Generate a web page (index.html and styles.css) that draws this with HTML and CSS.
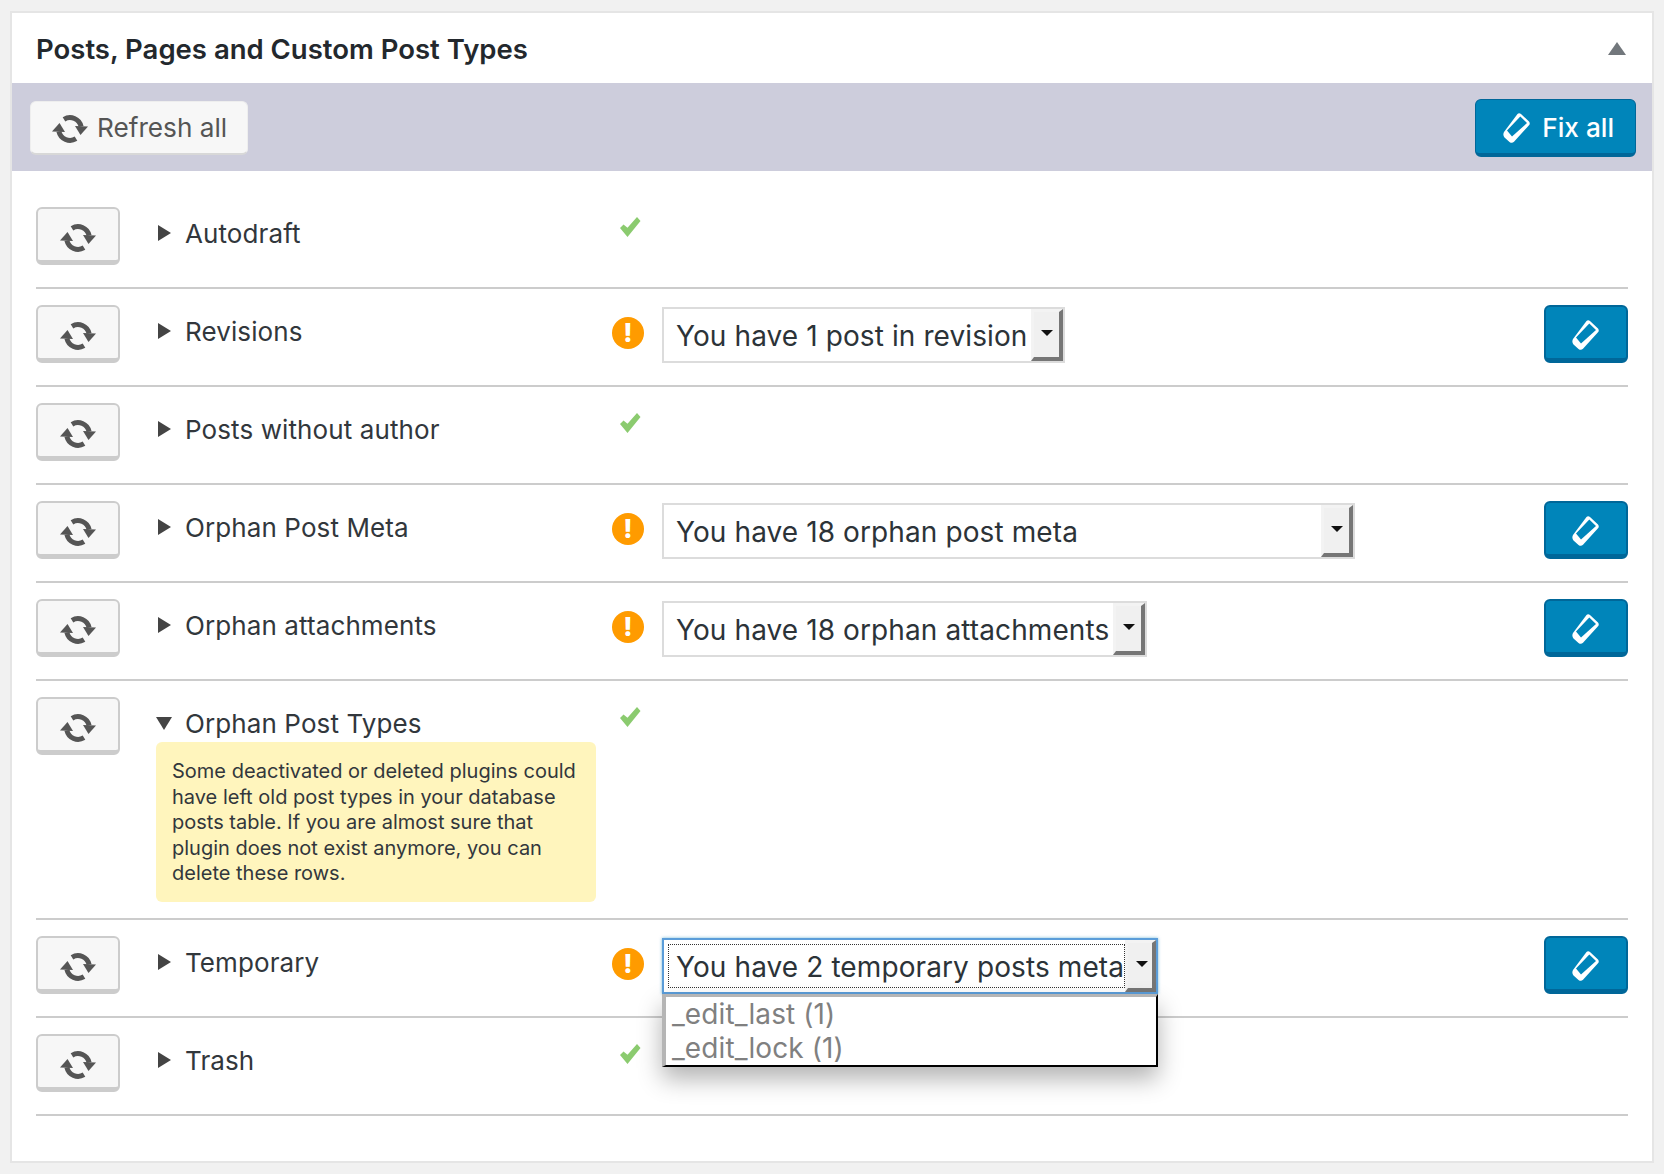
FILE: index.html
```html
<!DOCTYPE html>
<html lang="en">
<head>
  <meta charset="UTF-8" />
  <meta name="viewport" content="width=device-width, initial-scale=1" />
  <title>Posts, Pages and Custom Post Types</title>
  <link rel="stylesheet" href="styles.css">
</head>
<body>
  <svg class="sprite" width="0" height="0" aria-hidden="true">
    <symbol id="icon-refresh" viewBox="0 0 36 28">
      <path d="M12 4.300A11.400 11.400 0 0 1 29.100 11.500" fill="none" stroke="currentColor" stroke-width="5"/>
      <path d="M24 23.700A11.400 11.400 0 0 1 6.900 16.500" fill="none" stroke="currentColor" stroke-width="5"/>
      <path d="M23 11L36 11.500L28.500 20Z" fill="currentColor"/>
      <path d="M13 17L0 16.500L7.500 8Z" fill="currentColor"/>
    </symbol>
    <symbol id="icon-eraser" viewBox="0 0 28 31">
      <path fill-rule="evenodd" fill="currentColor" d="M14.500 1Q16 -0.300 18 1L26 8.500Q27.500 10.500 26 12.300L11 28.800Q9 30.800 6.500 29L1.500 24.500Q-0.500 22 1 19ZM17.300 3.500L4 17.500L9 23.500L24 10Z"/>
    </symbol>
    <symbol id="icon-check" viewBox="0 0 22 22">
      <path d="M1 12L4.500 8.500L8.500 11.800L18 1L21.500 5L8.500 21Z" fill="currentColor"/>
    </symbol>
  </svg>

  <section class="panel">
    <header class="panel-head">
      <h2>Posts, Pages and Custom Post Types</h2>
      <span class="collapse"></span>
    </header>

    <div class="toolbar">
      <button class="btn btn-all"><svg class="ico-refresh"><use href="#icon-refresh"/></svg>Refresh all</button>
      <button class="btn btn-blue btn-all"><svg class="ico-eraser"><use href="#icon-eraser"/></svg>Fix all</button>
    </div>

    <div class="rows">
      <div class="row">
        <button class="btn btn-row"><svg class="ico-refresh"><use href="#icon-refresh"/></svg></button>
        <div class="desc"><div class="name"><span class="arrow"></span>Autodraft</div></div>
        <div class="status"><svg class="ok"><use href="#icon-check"/></svg></div>
      </div>

      <div class="row">
        <button class="btn btn-row"><svg class="ico-refresh"><use href="#icon-refresh"/></svg></button>
        <div class="desc"><div class="name"><span class="arrow"></span>Revisions</div></div>
        <div class="status"><span class="warn">!</span></div>
        <div class="result"><div class="pick w-revision"><span class="pick-text">You have 1 post in revision</span><span class="pick-btn"></span></div></div>
        <button class="btn btn-blue btn-row"><svg class="ico-eraser"><use href="#icon-eraser"/></svg></button>
      </div>

      <div class="row">
        <button class="btn btn-row"><svg class="ico-refresh"><use href="#icon-refresh"/></svg></button>
        <div class="desc"><div class="name"><span class="arrow"></span>Posts without author</div></div>
        <div class="status"><svg class="ok"><use href="#icon-check"/></svg></div>
      </div>

      <div class="row">
        <button class="btn btn-row"><svg class="ico-refresh"><use href="#icon-refresh"/></svg></button>
        <div class="desc"><div class="name"><span class="arrow"></span>Orphan Post Meta</div></div>
        <div class="status"><span class="warn">!</span></div>
        <div class="result"><div class="pick w-meta"><span class="pick-text">You have 18 orphan post meta</span><span class="pick-btn"></span></div></div>
        <button class="btn btn-blue btn-row"><svg class="ico-eraser"><use href="#icon-eraser"/></svg></button>
      </div>

      <div class="row">
        <button class="btn btn-row"><svg class="ico-refresh"><use href="#icon-refresh"/></svg></button>
        <div class="desc"><div class="name"><span class="arrow"></span>Orphan attachments</div></div>
        <div class="status"><span class="warn">!</span></div>
        <div class="result"><div class="pick w-attach"><span class="pick-text">You have 18 orphan attachments</span><span class="pick-btn"></span></div></div>
        <button class="btn btn-blue btn-row"><svg class="ico-eraser"><use href="#icon-eraser"/></svg></button>
      </div>

      <div class="row">
        <button class="btn btn-row"><svg class="ico-refresh"><use href="#icon-refresh"/></svg></button>
        <div class="desc">
          <div class="name"><span class="arrow arrow-open"></span>Orphan Post Types</div>
          <p class="note">Some deactivated or deleted plugins could have left old post types in your database posts table. If you are almost sure that plugin does not exist anymore, you can delete these rows.</p>
        </div>
        <div class="status"><svg class="ok"><use href="#icon-check"/></svg></div>
      </div>

      <div class="row">
        <button class="btn btn-row"><svg class="ico-refresh"><use href="#icon-refresh"/></svg></button>
        <div class="desc"><div class="name"><span class="arrow"></span>Temporary</div></div>
        <div class="status"><span class="warn">!</span></div>
        <div class="result">
          <div class="pick pick-open w-temp">
            <span class="pick-text">You have 2 temporary posts meta</span><span class="pick-btn"></span>
            <ul class="menu">
              <li>_edit_last (1)</li>
              <li>_edit_lock (1)</li>
            </ul>
          </div>
        </div>
        <button class="btn btn-blue btn-row"><svg class="ico-eraser"><use href="#icon-eraser"/></svg></button>
      </div>

      <div class="row">
        <button class="btn btn-row"><svg class="ico-refresh"><use href="#icon-refresh"/></svg></button>
        <div class="desc"><div class="name"><span class="arrow"></span>Trash</div></div>
        <div class="status"><svg class="ok"><use href="#icon-check"/></svg></div>
      </div>
    </div>
  </section>
</body>
</html>
```

FILE: styles.css
```css
:root {
  --blue: #0085ba;
  --blue-dark: #006799;
  --line: #cccccc;
  --text: #32373c;
  --grey: #555555;
}

* {
  margin: 0;
  padding: 0;
  box-sizing: border-box;
}

body {
  background: #f1f1f1;
  color: var(--text);
  font-family: Inter, "Noto Sans", sans-serif;
  padding: 11px 10px 0 10px;
}

.sprite {
  position: absolute;
}

.panel {
  background: #fff;
  border: 2px solid #e5e5e5;
}

.panel-head {
  height: 70px;
  display: flex;
  align-items: center;
  justify-content: space-between;
  padding: 1px 26px 0 24px;
}

.panel-head h2 {
  font-size: 27.5px;
  font-weight: 600;
  color: #23282d;
}

.collapse {
  width: 0;
  height: 0;
  border-left: 9px solid transparent;
  border-right: 9px solid transparent;
  border-bottom: 13px solid #72777c;
}

.toolbar {
  height: 88px;
  padding: 1px 16px 0 18px;
  background: #cdcddc;
  display: flex;
  align-items: center;
  justify-content: space-between;
}

.btn {
  display: inline-flex;
  align-items: center;
  justify-content: center;
  background: #f7f7f7;
  border: 2px solid var(--line);
  border-bottom-width: 5px;
  border-radius: 6px;
  color: var(--grey);
  font: inherit;
}

.btn-row {
  width: 84px;
  height: 58px;
  margin-bottom: 6px;
  padding-top: 6px;
}

.btn-all {
  height: 54px;
  padding: 0 20px 0 21px;
  font-size: 26.200px;
  gap: 9px;
}

.toolbar .btn {
  border-color: #eee;
  border-bottom-color: #d8d8d8;
  border-width: 1px 1px 2px;
}

.toolbar svg {
  margin-top: 3px;
}

.toolbar .btn-blue {
  height: 58px;
  padding: 2px 21px 0 27px;
  gap: 11px;
  font-weight: 500;
  border-color: var(--blue-dark);
  border-bottom-width: 4px;
}

.btn-blue {
  background: var(--blue);
  border-color: var(--blue-dark);
  color: #fff;
}

.ico-refresh {
  width: 36px;
  height: 28px;
  flex: none;
}

.ico-eraser {
  width: 28px;
  height: 31px;
  flex: none;
}

.rows {
  padding: 20px 24px 45px;
}

.row {
  display: grid;
  grid-template-columns: 120px 456px 50px 1fr 84px;
  padding: 16px 0;
  border-bottom: 2px solid var(--line);
}

.name {
  display: flex;
  align-items: center;
  height: 32px;
  margin-top: 10px;
  font-size: 26px;
  letter-spacing: 0.1px;
}

.arrow {
  width: 0;
  height: 0;
  margin: 0 14px 0 2px;
  border-top: 8px solid transparent;
  border-bottom: 8px solid transparent;
  border-left: 13px solid #444;
}

.arrow-open {
  margin: 0 13px 0 0;
  border-left: 8px solid transparent;
  border-right: 8px solid transparent;
  border-top: 13px solid #444;
  border-bottom: 0;
}

.note {
  width: 440px;
  height: 160px;
  margin-top: 3px;
  padding: 17px 16px;
  background: #fff5bd;
  border-radius: 6px;
  font-size: 20px;
  line-height: 25.500px;
}

.ok {
  display: block;
  width: 22px;
  height: 22px;
  margin: 9px 0 0 7px;
  color: #8bcb6f;
}

.warn {
  display: block;
  width: 32px;
  height: 32px;
  margin-top: 12px;
  border-radius: 50%;
  background: #ff9b00;
  color: #fff;
  font-size: 26px;
  font-weight: 800;
  line-height: 32px;
  text-align: center;
}

.result {
  padding-top: 2px;
}

.pick {
  position: relative;
  display: flex;
  height: 56px;
  border: 2px solid #dcdcdc;
  background: #fff;
  font-size: 28px;
  letter-spacing: 0.1px;
  color: #2c3338;
}

.w-revision { width: 403px; }
.w-meta { width: 693px; }
.w-attach { width: 485px; }
.w-temp { width: 496px; }

.pick-text {
  flex: 1;
  overflow: hidden;
  padding-left: 12px;
  line-height: 54px;
  white-space: nowrap;
}

.pick-btn {
  position: relative;
  flex: none;
  width: 32px;
  background: #f0f0f0;
  border-style: solid;
  border-width: 3px 4px 4px 3px;
  border-color: #f3f3f3 #767676 #767676 #f3f3f3;
}

.pick-btn::after {
  content: "";
  position: absolute;
  top: 18px;
  left: 7px;
  border-left: 6px solid transparent;
  border-right: 6px solid transparent;
  border-top: 6px solid #111;
}

.pick-open {
  border-color: #5b9dd9;
  box-shadow: 0 0 3px rgba(30, 140, 190, 0.6);
}

.pick-open .pick-text {
  margin: 4px 0 4px 4px;
  padding-left: 7px;
  line-height: 44px;
  border: 1px dotted #333;
}

.pick-open .pick-btn {
  width: 31px;
}

.pick-open .pick-btn::after {
  left: 8px;
}

.menu {
  position: absolute;
  top: 54px;
  left: -2px;
  width: 496px;
  list-style: none;
  background: #fff;
  border-style: solid;
  border-width: 3px 2px 2px 4px;
  border-color: #b5b5b5 #000 #000 #b5b5b5;
  box-shadow: 0 12px 24px rgba(0, 0, 0, 0.3);
  color: #808080;
  line-height: 33.500px;
  padding: 1px 0 0 6px;
  z-index: 2;
}
```
